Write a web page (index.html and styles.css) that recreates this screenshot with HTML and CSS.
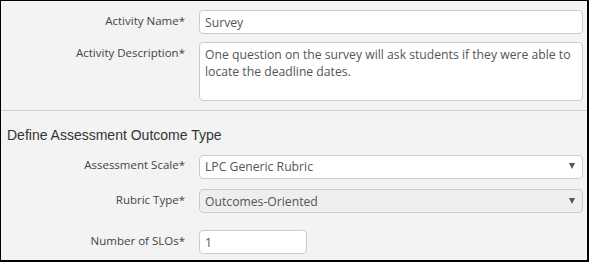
FILE: index.html
```html
<!DOCTYPE html>
<html lang="en">
<head>
<meta charset="UTF-8" />
<meta name="viewport" content="width=device-width, initial-scale=1" />
<title>Activity</title>
<link rel="stylesheet" href="styles.css">
</head>
<body>

<div class="panel">
  <div class="activity-section">
    <div class="form-row">
      <label for="activityName">Activity Name*</label>
      <input type="text" id="activityName" value="Survey" />
    </div>
    <div class="form-row">
      <label for="activityDesc">Activity Description*</label>
      <textarea id="activityDesc">One question on the survey will ask students if they were able to locate the deadline dates.</textarea>
    </div>
  </div>

  <div class="outcome-section">
    <h3>Define Assessment Outcome Type</h3>
    <div class="form-row">
      <label for="assessmentScale">Assessment Scale*</label>
      <div class="select-wrap">
        <select id="assessmentScale">
          <option>LPC Generic Rubric</option>
        </select>
      </div>
    </div>
    <div class="form-row">
      <label for="rubricType">Rubric Type*</label>
      <div class="select-wrap disabled">
        <select id="rubricType" disabled>
          <option>Outcomes-Oriented</option>
        </select>
      </div>
    </div>
    <div class="form-row slo-row">
      <label for="sloCount">Number of SLOs*</label>
      <input type="text" id="sloCount" class="small-input" value="1" />
    </div>
  </div>
</div>

</body>
</html>
```

FILE: styles.css
```css
body {
  margin: 0;
  padding: 0;
  font-family: "Open Sans", sans-serif;
}
.panel {
  box-sizing: border-box;
  width: 589px;
  height: 262px;
  background: #f3f3f3;
  border-top: 1px solid #000;
  border-left: 1px solid #000;
  border-right: 2px solid #000;
  border-bottom: 2px solid #000;
  overflow: hidden;
}
.activity-section {
  padding: 9px 4px 9px 0;
  border-bottom: 1px solid #cfcfcf;
}
.outcome-section {
  padding: 0 4px 0 0;
}
.outcome-section h3 {
  font-family: "Liberation Sans", Arial, sans-serif;
  font-size: 14px;
  font-weight: normal;
  line-height: 16px;
  color: #333;
  margin: 16px 0 11px 6px;
}
.form-row {
  display: grid;
  grid-template-columns: 184px 1fr;
  column-gap: 14px;
  margin-bottom: 8px;
}
.form-row:last-child {
  margin-bottom: 0;
}
.outcome-section .form-row {
  margin-bottom: 10px;
}
.outcome-section .slo-row {
  margin-top: 17px;
}
label {
  text-align: right;
  font-size: 11.5px;
  line-height: 16px;
  padding-top: 3px;
  color: #444;
}
input, textarea, select {
  box-sizing: border-box;
  font-family: "Open Sans", sans-serif;
  font-size: 12.2px;
  color: #555;
  background: #fff;
  border: 1px solid #ccc;
  border-radius: 4px;
  margin: 0;
  outline: none;
}
input {
  height: 24px;
  padding: 0 5px;
}
textarea {
  height: 59px;
  padding: 3px 5px;
  line-height: 17px;
  resize: none;
  overflow: hidden;
}
.select-wrap {
  position: relative;
}
.select-wrap select {
  -webkit-appearance: none;
  appearance: none;
  width: 100%;
  height: 24px;
  padding: 0 5px;
}
.select-wrap.disabled select {
  background: #eee;
  opacity: 1;
}
.select-wrap::after {
  content: "";
  position: absolute;
  right: 8px;
  top: 9px;
  border-left: 3px solid transparent;
  border-right: 3px solid transparent;
  border-top: 6px solid #555;
  pointer-events: none;
}
.small-input {
  width: 108px;
}
```
